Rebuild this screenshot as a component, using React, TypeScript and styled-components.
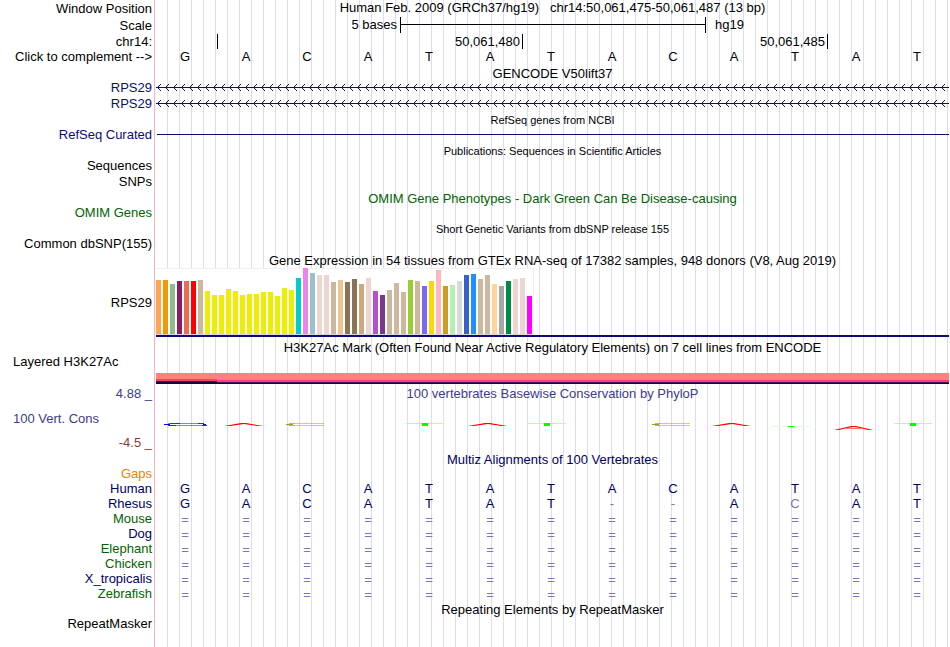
import { PropsWithChildren } from 'react';
import styled, { createGlobalStyle } from 'styled-components';

const NAVY = '#0c0c78';
const GREEN = '#006400';
const ALIGN_BLUE = '#000064';
const MUTED = '#7878b4';

const BASES = 'GACATATACATAT'.split('');

const SPECIES = [
  { name: 'Human', color: ALIGN_BLUE, bases: 'GACATATACATAT' },
  { name: 'Rhesus', color: ALIGN_BLUE, bases: 'GACATAT--ACAT' },
  { name: 'Mouse', color: GREEN, bases: '=============' },
  { name: 'Dog', color: ALIGN_BLUE, bases: '=============' },
  { name: 'Elephant', color: GREEN, bases: '=============' },
  { name: 'Chicken', color: GREEN, bases: '=============' },
  { name: 'X_tropicalis', color: ALIGN_BLUE, bases: '=============' },
  { name: 'Zebrafish', color: GREEN, bases: '=============' },
];

// one entry per GTEx tissue: colour, bar height
const TISSUES: [string, number][] = [
  ['#ffa54f', 54], ['#ee9a00', 54], ['#8fbc8f', 50], ['#8b1c62', 53], ['#ee6a50', 53], ['#ff0000', 53],
  ['#cdb79e', 54], ['#eeee00', 43], ['#eeee00', 39], ['#eeee00', 39], ['#eeee00', 45], ['#eeee00', 43],
  ['#eeee00', 39], ['#eeee00', 40], ['#eeee00', 40], ['#eeee00', 42], ['#eeee00', 42], ['#eeee00', 38],
  ['#eeee00', 46], ['#eeee00', 44], ['#00cdcd', 56], ['#ee82ee', 66], ['#9ac0cd', 61], ['#eed5d2', 59],
  ['#eed5d2', 59], ['#cdb79e', 52], ['#eec591', 54], ['#8b7355', 52], ['#8b7355', 55], ['#cdaa7d', 50],
  ['#eed5d2', 56], ['#b452cd', 43], ['#7a378b', 39], ['#cdb79e', 44], ['#cdb79e', 51], ['#cdb79e', 42],
  ['#9acd32', 54], ['#cdb79e', 53], ['#7b68ee', 48], ['#ffd700', 53], ['#ffb6c1', 64], ['#cd9b1d', 48],
  ['#b4eeb4', 49], ['#d9d9d9', 53], ['#3a5fcd', 59], ['#1e90ff', 60], ['#cdb79e', 55], ['#cdb79e', 59],
  ['#ffd39b', 50], ['#a6a6a6', 48], ['#008b45', 53], ['#eed5d2', 55], ['#eed5d2', 56], ['#ff00ff', 38],
];

const CONSERVATION = ['G', 'A', 'C', '', 'T', 'A', 'T', '', 'C', 'A', 't', 'a', 'T'];

const Arrows = ({ id }: { id: string }) => (
  <Drawing height="16" shapeRendering="crispEdges">
    <defs>
      <pattern id={id} width="8" height="16" patternUnits="userSpaceOnUse">
        <path
          d="M0 7h8v1H0zM2 6h1v1H2zM2 8h1v1H2zM3 5h1v1H3zM3 9h1v1H3zM4 4h1v1H4zM4 10h1v1H4z"
          fill={NAVY}
        />
      </pattern>
    </defs>
    <rect width="100%" height="16" fill={`url(#${id})`} />
  </Drawing>
);

const Expression = () => (
  <Chart width="378" height="67" viewBox="0 0 378 67" shapeRendering="crispEdges">
    <rect width="378" height="67" fill="#fff" />
    <path d="M0 0h378v67h-1V1H0z" fill="#f0f0f0" />
    <rect y="66" width="378" height="1" fill="#d8d8d8" />
    {TISSUES.map(([color, height], i) => (
      <rect key={i} x={i * 7} y={66 - height} width="5" height={height} fill={color} />
    ))}
  </Chart>
);

const LogoLetter = ({ letter }: { letter: string }) => (
  <Drawing height="8" viewBox="0 0 61 8" preserveAspectRatio="none">
    {letter === 'G' && (
      <g fill="none" stroke="#0000ff">
        <path d="M12 1.5H48M12 3.5H51" strokeOpacity="0.5" />
        <path d="M14 1.5h10M42 1.5h6M12 3.5h8M46 3.5h5" strokeOpacity="0.7" />
        <path d="M8 2.5h6M47 2.5h3" />
      </g>
    )}
    {letter === 'C' && (
      <g fill="none" stroke="#a0a000">
        <path d="M11 1.5H46M11 3.5H46" strokeOpacity="0.5" />
        <path d="M11 1.5h6M11 3.5h6" strokeOpacity="0.4" />
        <path d="M8 2.5h7" />
      </g>
    )}
    {letter === 'A' && <path d="M7 4L24 1h5L46 4H40L27 2L13 4z" fill="#ff0000" />}
    {letter === 'a' && (
      <path d="M7 8L24 4h5L46 8H41L35 6.5H18L12 8zM20 6h13L27 5z" fill="#ff0000" fillRule="evenodd" />
    )}
    {letter === 'T' && (
      <>
        <path d="M6 1h38v1H6z" fill="#b4ffb4" />
        <path d="M22 1h6v3h-6z" fill="#00ff00" />
      </>
    )}
    {letter === 't' && (
      <>
        <path d="M6 4h38v1H6z" fill="#dcffdc" />
        <path d="M22 4h6v1h-6z" fill="#00ff00" />
      </>
    )}
  </Drawing>
);

const Track = ({ label, color, height, children }: PropsWithChildren<{ label?: string; color?: string; height?: number }>) => (
  <Row $height={height}>
    <Label $color={color}>{label}</Label>
    <Data>{children}</Data>
  </Row>
);

const TrackTitle = ({ text, color, small }: { text: string; color?: string; small?: boolean }) => (
  <Row $height={15}>
    <Label />
    <Data>
      <SpacedTitle $color={color} $small={small}>{text}</SpacedTitle>
    </Data>
  </Row>
);

export default function App() {
  return (
    <>
      <GlobalStyle />
      <Browser>
        <Track label="Window Position" height={17}>
          <Title>
            Human Feb. 2009 (GRCh37/hg19) &nbsp; chr14:50,061,475-50,061,487 (13 bp)
          </Title>
        </Track>
        <Track label="Scale" height={17}>
          <Columns>
            <ScaleText>5 bases</ScaleText>
            <ScaleBar />
            <Assembly>hg19</Assembly>
          </Columns>
        </Track>
        <Track label="chr14:" height={15}>
          <Columns>
            <Position $span={1} />
            <Position $span={5}>50,061,480</Position>
            <Position $span={5}>50,061,485</Position>
          </Columns>
        </Track>
        <Row $height={16}>
          <Label>
            <ComplementButton type="button">Click to complement --&gt;</ComplementButton>
          </Label>
          <Data>
            <Columns>
              {BASES.map((base, i) => <Base key={i}>{base}</Base>)}
            </Columns>
          </Data>
        </Row>

        <TrackTitle text="GENCODE V50lift37" />
        <Track label="RPS29" color={NAVY}><Arrows id="strand-a" /></Track>
        <Track label="RPS29" color={NAVY}><Arrows id="strand-b" /></Track>

        <TrackTitle text="RefSeq genes from NCBI" small />
        <Track label="RefSeq Curated" color={NAVY}><GeneLine /></Track>

        <TrackTitle text="Publications: Sequences in Scientific Articles" small />
        <Track label="Sequences" />
        <Track label="SNPs" />

        <TrackTitle text="OMIM Gene Phenotypes - Dark Green Can Be Disease-causing" color={GREEN} />
        <Track label="OMIM Genes" color={GREEN} />

        <TrackTitle text="Short Genetic Variants from dbSNP release 155" small />
        <Track label="Common dbSNP(155)" />

        <TrackTitle text="Gene Expression in 54 tissues from GTEx RNA-seq of 17382 samples, 948 donors (V8, Aug 2019)" />
        <Track label="RPS29" height={72}>
          <ExpressionPanel>
            <Expression />
          </ExpressionPanel>
        </Track>

        <TrackTitle text="H3K27Ac Mark (Often Found Near Active Regulatory Elements) on 7 cell lines from ENCODE" />
        <Row $height={32}>
          <TopLabel>Layered H3K27Ac</TopLabel>
          <Data>
            <Signal>
              <SignalPart $span={1} $top={6} />
              <SignalPart $span={12} $top={7} />
            </Signal>
          </Data>
        </Row>

        <Row $height={65}>
          <ScaleLabels>
            <Limit $color="#3c3c8c">4.88 _</Limit>
            <ConsName>100 Vert. Cons</ConsName>
            <Limit $color="#8c3c3c">-4.5 _</Limit>
          </ScaleLabels>
          <Data>
            <Title $color="#3c3c8c">100 vertebrates Basewise Conservation by PhyloP</Title>
            <Logo>
              {CONSERVATION.map((letter, i) => <LogoLetter key={i} letter={letter} />)}
            </Logo>
          </Data>
        </Row>

        <TrackTitle text="Multiz Alignments of 100 Vertebrates" color={ALIGN_BLUE} />
        <Track label="Gaps" color="#e68200" height={15} />
        {SPECIES.map(({ name, color, bases }) => (
          <Track key={name} label={name} color={color} height={15}>
            <Columns>
              {bases.split('').map((base, i) => (
                <Base key={i} $color={base === BASES[i] ? ALIGN_BLUE : MUTED} $low={base === '='}>{base}</Base>
              ))}
            </Columns>
          </Track>
        ))}

        <TrackTitle text="Repeating Elements by RepeatMasker" />
        <Track label="RepeatMasker" />
        <Filler>
          <Label />
          <Data />
        </Filler>
      </Browser>
    </>
  );
}

const GlobalStyle = createGlobalStyle`
  body {
    margin: 0;
    background: #fff;
  }
`;

const Browser = styled.main`
  display: flex;
  flex-direction: column;
  min-height: 100vh;
  padding-right: 1px;
  box-sizing: border-box;
  color: #000;
  font-family: 'Liberation Sans', Arial, sans-serif;
  font-size: 13px;
  line-height: 16px;
  white-space: nowrap;
`;

const Row = styled.div<{ $height?: number }>`
  display: grid;
  grid-template-columns: 155px 1fr;
  column-gap: 1px;
  min-height: ${p => p.$height ?? 16}px;
  line-height: ${p => Math.min(p.$height ?? 16, 16)}px;
`;

const Filler = styled(Row)`
  flex: 1;
  min-height: 0;
`;

const Label = styled.div<{ $color?: string }>`
  display: flex;
  align-items: center;
  justify-content: flex-end;
  padding-right: 2px;
  border-right: 1px solid #ffb0b0;
  color: ${p => p.$color ?? '#000'};
`;

const TopLabel = styled(Label)`
  align-items: flex-start;
  justify-content: flex-start;
  padding-left: 13px;
`;

const ScaleLabels = styled(Label)`
  flex-direction: column;
  align-items: stretch;
  justify-content: space-between;
  padding-left: 13px;
`;

const Limit = styled.span<{ $color: string }>`
  color: ${p => p.$color};
  text-align: right;
`;

const ConsName = styled.span`
  color: #3c3c8c;
`;

const ComplementButton = styled.button`
  padding: 0;
  border: 0;
  background: none;
  color: inherit;
  font: inherit;
  cursor: pointer;
`;

const Data = styled.div`
  display: flex;
  flex-direction: column;
  min-width: 0;
  background: repeating-linear-gradient(to right, transparent 0 11px, #dcdcfa 11px 12px);
`;

const Title = styled.div<{ $color?: string; $small?: boolean }>`
  color: ${p => p.$color ?? '#000'};
  font-size: ${p => p.$small ? 11 : 13}px;
  text-align: center;
`;

const SpacedTitle = styled(Title)`
  padding-top: 2px;
  line-height: 13px;
`;

const Columns = styled.div`
  flex: 1;
  display: grid;
  grid-template-columns: repeat(13, 1fr);
`;

const Base = styled.span<{ $color?: string; $low?: boolean }>`
  align-self: ${p => p.$low ? 'end' : 'start'};
  padding-right: 3px;
  color: ${p => p.$color ?? '#000'};
  line-height: ${p => p.$low ? '13px' : 'inherit'};
  text-align: center;
`;

const ScaleText = styled.span`
  grid-column: span 4;
  padding-right: 3px;
  text-align: right;
`;

const ScaleBar = styled.div`
  grid-column: span 5;
  margin: 0 -1px 1px 0;
  border: solid #000;
  border-width: 0 1px;
  background: linear-gradient(#000, #000) 0 7px / 100% 1px no-repeat;
`;

const Assembly = styled.span`
  grid-column: span 4;
  padding-left: 10px;
`;

const Position = styled.div<{ $span: number }>`
  grid-column: span ${p => p.$span};
  margin-right: -1px;
  padding-right: 2px;
  border-right: 1px solid #000;
  text-align: right;
`;

const Drawing = styled.svg`
  display: block;
  width: 100%;
`;

const Chart = styled.svg`
  display: block;
`;

const GeneLine = styled.div`
  height: 1px;
  margin: 7px 0 0 1px;
  background: ${NAVY};
`;

const ExpressionPanel = styled.div`
  margin-top: 1px;
  border-bottom: 2px solid ${NAVY};
`;

const Signal = styled.div`
  display: grid;
  grid-template-columns: repeat(13, 1fr);
  height: 11px;
  margin-top: 19px;
`;

const SignalPart = styled.div<{ $span: number; $top: number }>`
  grid-column: span ${p => p.$span};
  background: linear-gradient(
    #ff8080 0 ${p => p.$top}px,
    #ff4068 ${p => p.$top}px ${p => p.$top + 2}px,
    #401860 ${p => p.$top + 2}px ${p => p.$top + 3}px,
    #140838 ${p => p.$top + 3}px
  );
`;

const Logo = styled.div`
  display: grid;
  grid-template-columns: repeat(13, 1fr);
  margin-top: 20px;
`;
